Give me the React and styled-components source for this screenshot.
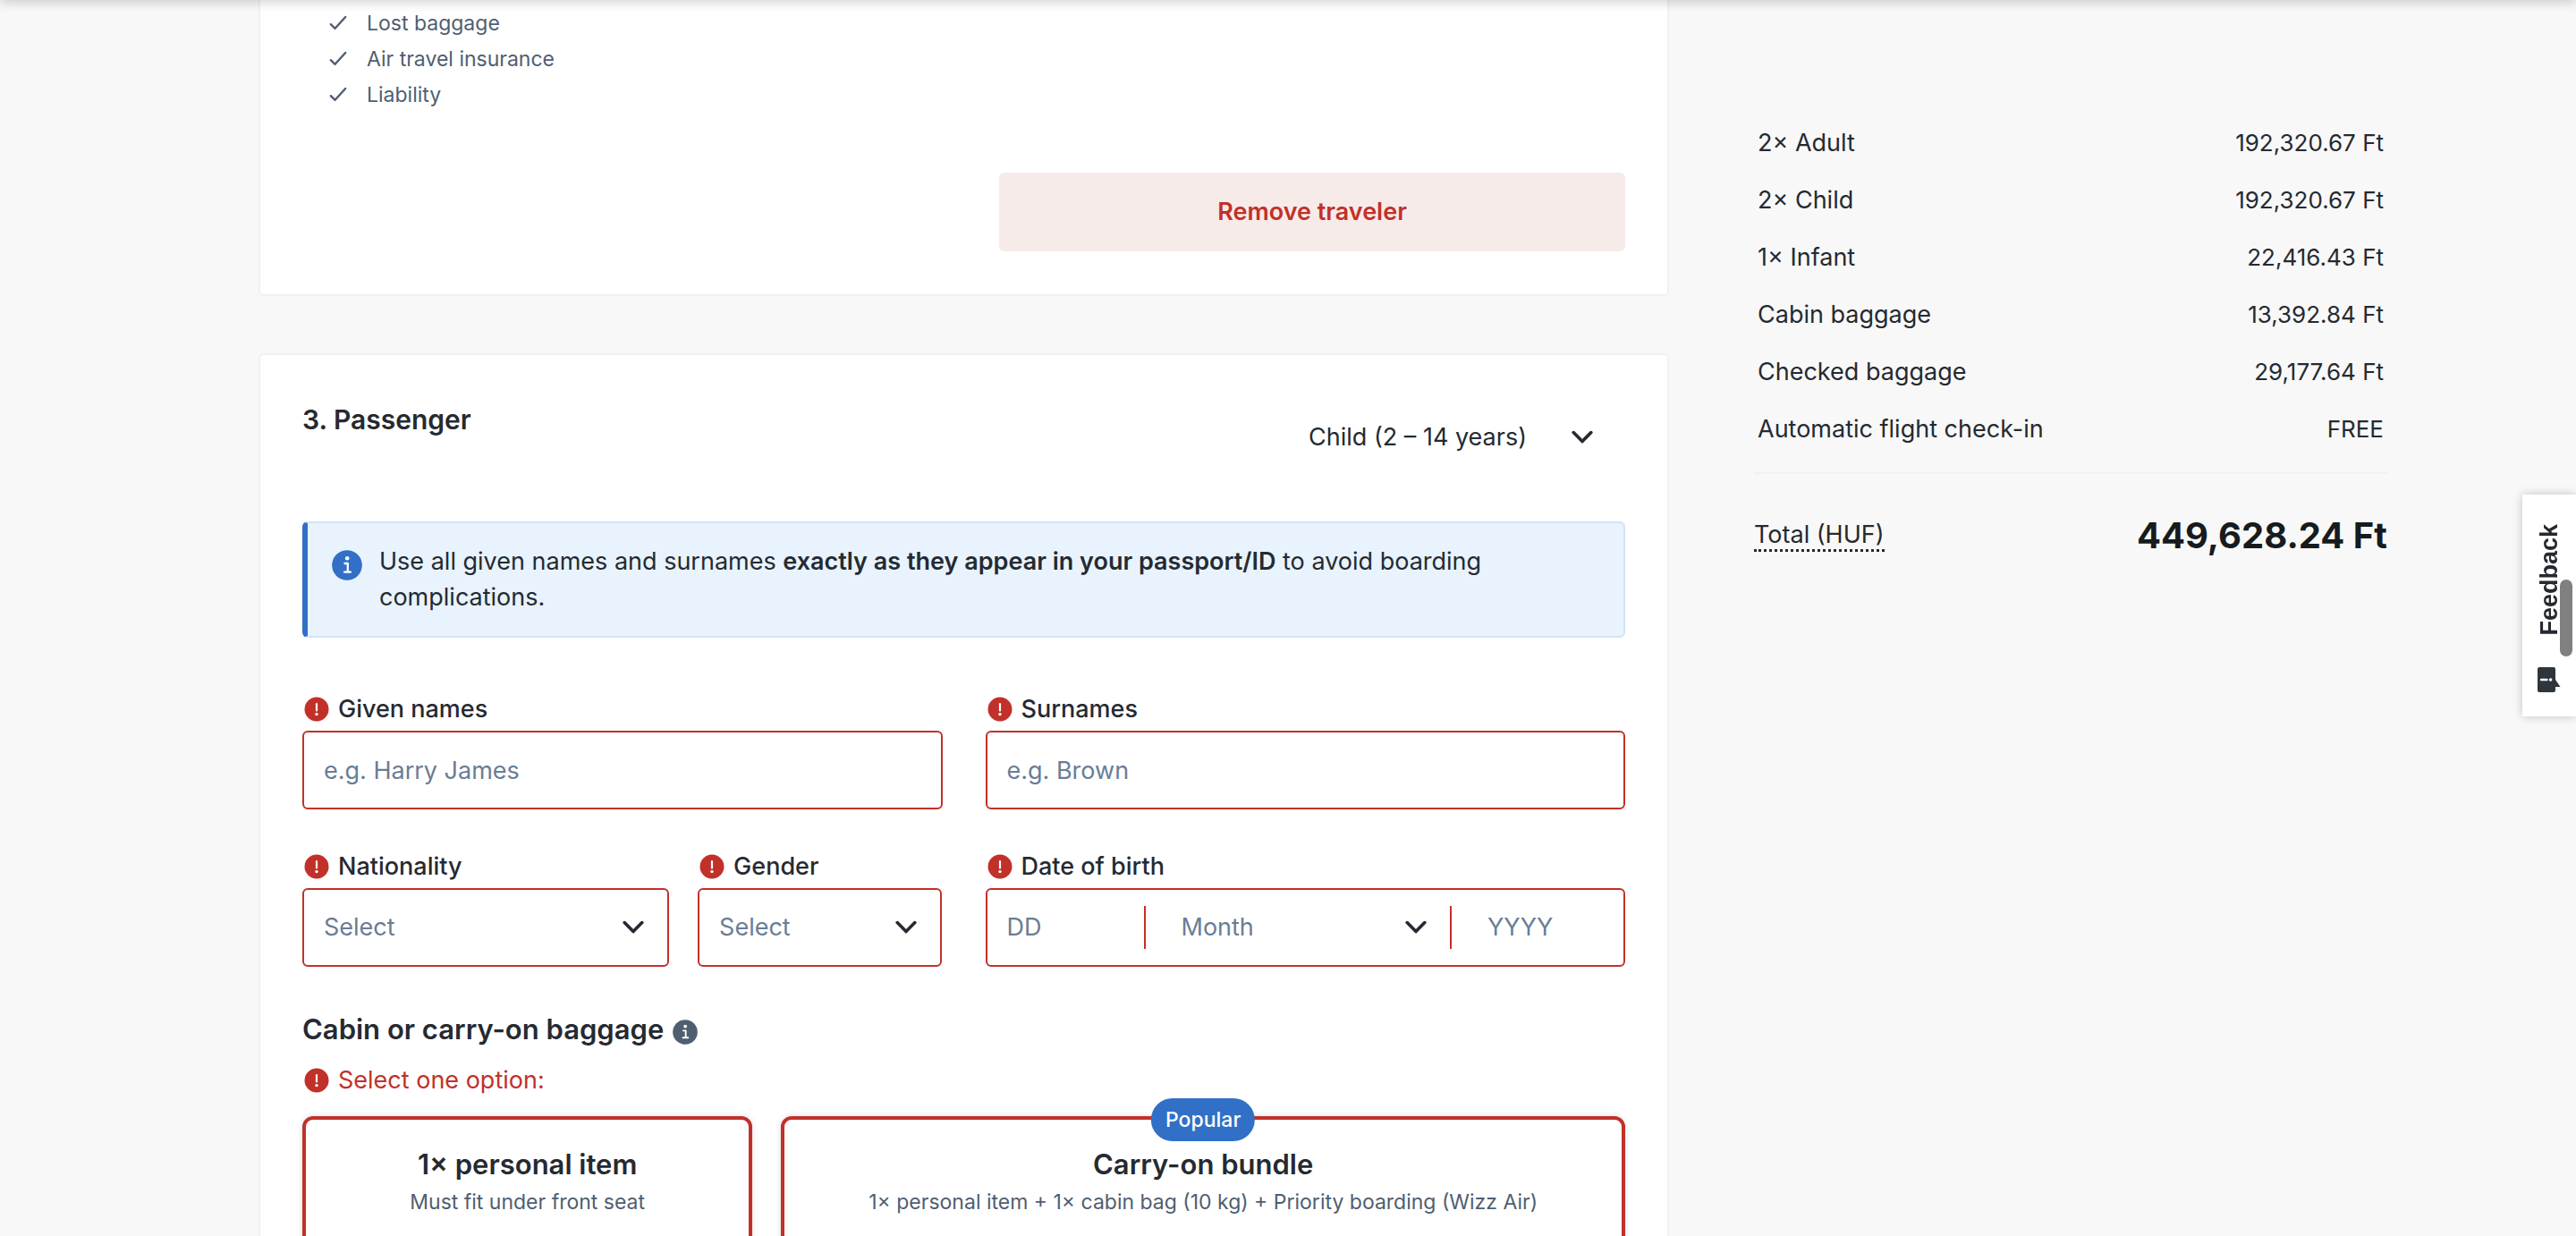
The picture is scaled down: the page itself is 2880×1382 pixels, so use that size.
import React from "react";
import styled, { createGlobalStyle, css } from "styled-components";

const c = {
  ink: "#252a31",
  muted: "#4f5e71",
  placeholder: "#697d95",
  red: "#c13129",
  redSoft: "#f6ebe9",
  blue: "#3170c6",
  blueSoft: "#e8f3fd",
  blueLine: "#d0e4f6",
  line: "#eff1f6",
  page: "#f8f8f8",
};

const Global = createGlobalStyle`
  *, *::before, *::after { box-sizing: border-box; }
  body {
    margin: 0;
    background: ${c.page};
    color: ${c.ink};
    font: 400 27px/40px Inter, Roboto, "Liberation Sans", sans-serif;
    overflow: hidden;
  }
  h2, h3, p, ul, dl, dd, dt { margin: 0; padding: 0; }
  button, input, select { font: inherit; color: inherit; margin: 0; }
`;

const Page = styled.div`
  height: 100vh;
  overflow: hidden;
  display: grid;
  grid-template-columns: minmax(0, 1fr) 708px;
  align-items: start;
  column-gap: 95px;
  padding: 0 211px 0 289px;
`;

const TopShadow = styled.div`
  position: fixed;
  inset: -8px 0 auto;
  height: 8px;
  box-shadow: 0 0 14px rgba(0, 0, 0, 0.32);
`;

const Main = styled.main`
  display: flex;
  flex-direction: column;
  gap: 64px;
`;

const Card = styled.section`
  background: #fff;
  border: 2px solid ${c.line};
  border-radius: 6px;
  padding: 48px 47px;
  ${(p) => p.$continued && css`
    border-top: 0;
    border-radius: 0 0 6px 6px;
    padding-top: 6px;
  `}
`;

const Perks = styled.ul`
  list-style: none;
  && { padding-left: 30px; }
  color: ${c.muted};
  font-size: 23px;
`;

const Perk = styled.li`
  display: flex;
  align-items: center;
  gap: 22px;
`;

const RemoveButton = styled.button`
  display: block;
  width: 700px;
  height: 88px;
  margin: 67px 0 0 auto;
  border: 0;
  border-radius: 6px;
  background: ${c.redSoft};
  color: ${c.red};
  font-weight: 600;
`;

const Header = styled.header`
  display: flex;
  justify-content: space-between;
  align-items: flex-start;
`;

const Title = styled.h2`
  font-size: 30px;
  font-weight: 600;
  line-height: 40px;
  && { padding-top: 4px; }
`;

const Alert = styled.div`
  display: flex;
  gap: 19px;
  margin-top: 50px;
  padding: 23px 96px 23px 27px;
  background: ${c.blueSoft};
  border: 2px solid ${c.blueLine};
  border-left: 6px solid ${c.blue};
  border-radius: 6px;

  svg { flex: none; margin-top: 7px; }
  strong { font-weight: 600; }
`;

const Fields = styled.div`
  display: grid;
  grid-template-columns: 1fr 1fr;
  gap: 48px;
  margin-top: 64px;
`;

const Pair = styled.div`
  display: grid;
  grid-template-columns: 3fr 2fr;
  gap: 32px;
`;

const Field = styled.div`
  display: flex;
  flex-direction: column;
  gap: 8px;
  min-width: 0;
`;

const labelLine = css`
  display: flex;
  align-items: center;
  gap: 10px;
  && { padding-left: 2px; }
  line-height: 32px;
`;

const Label = styled.label`
  ${labelLine}
  font-weight: 500;
`;

const ErrorLine = styled.p`
  ${labelLine}
  && { margin: 21px 0 24px; }
  color: ${c.red};
`;

const boxed = css`
  height: 88px;
  border: 2px solid ${c.red};
  border-radius: 6px;
  background: #fff;
`;

const Input = styled.input`
  width: 100%;
  min-width: 0;
  padding: 0 22px;
  border: 0;
  background: transparent;
  outline: 0;
  ${(p) => p.$boxed && boxed}
  &::placeholder { color: ${c.placeholder}; opacity: 1; }
`;

const SelectWrap = styled.div`
  position: relative;
  display: flex;
  min-width: 0;
  ${(p) => p.$boxed && boxed}

  svg {
    position: absolute;
    right: ${(p) => p.$iconRight || 26}px;
    top: 50%;
    transform: translateY(-50%);
    pointer-events: none;
  }
`;

const Select = styled.select`
  appearance: none;
  width: 100%;
  height: 100%;
  padding: 0 72px 0 ${(p) => p.$left || 22}px;
  border: 0;
  background: transparent;
  color: ${(p) => (p.$filled ? c.ink : c.placeholder)};
  outline: 0;
`;

const TypeSelect = styled(SelectWrap)`
  flex: none;
  width: 362px;
  height: 88px;
`;

const DateBox = styled.div`
  ${boxed}
  display: grid;
  grid-template-columns: 175px minmax(0, 1fr) 194px;
  align-items: center;
`;

const DatePart = styled.div`
  height: 48px;
  border-left: 2px solid ${c.red};
  display: flex;
  > * { flex: 1; }
  input { padding-left: 40px; }
`;

const SectionTitle = styled.h3`
  display: flex;
  align-items: center;
  gap: 10px;
  && { margin-top: 50px; }
  font-size: 31px;
  font-weight: 600;
  line-height: 40px;
  svg { margin-top: 6px; }
`;

const Options = styled.div`
  display: grid;
  grid-template-columns: 8fr 15fr;
  gap: 32px;
`;

const Option = styled.button`
  position: relative;
  display: flex;
  flex-direction: column;
  align-items: center;
  gap: 6px;
  padding: 30px 24px 96px;
  border: 4px solid ${c.red};
  border-radius: 12px;
  background: #fff;
  box-shadow: 0 0 6px rgba(37, 42, 49, 0.16);
`;

const OptionName = styled.span`
  font-size: 31px;
  font-weight: 600;
  line-height: 40px;
`;

const OptionNote = styled.span`
  color: ${c.muted};
  font-size: 23px;
  line-height: 32px;
`;

const Badge = styled.span`
  position: absolute;
  top: -24px;
  left: 50%;
  transform: translateX(-50%);
  padding: 0 16px;
  border-radius: 24px;
  background: ${c.blue};
  color: #fff;
  font-size: 23px;
  font-weight: 500;
  line-height: 48px;
`;

const Summary = styled.aside`
  padding-top: 128px;
`;

const Prices = styled.dl`
  && { padding: 0 4px 16px; }
  border-bottom: 2px solid ${c.line};
`;

const PriceRow = styled.div`
  display: flex;
  justify-content: space-between;
  padding: 12px 0;
  dd { font-size: 26px; }
`;

const Total = styled.div`
  display: flex;
  justify-content: space-between;
  align-items: center;
  margin-top: 45px;
`;

const TotalLabel = styled.span`
  line-height: 32px;
  border-bottom: 3px dotted ${c.ink};
`;

const TotalPrice = styled.strong`
  color: #171b1e;
  font-size: 40px;
  font-weight: 700;
  line-height: 48px;
`;

const Feedback = styled.button`
  position: fixed;
  right: 0;
  top: 553px;
  width: 60px;
  height: 248px;
  padding: 0 0 27px;
  border: 0;
  background: #fff;
  box-shadow: 0 0 10px rgba(0, 0, 0, 0.22);
  display: flex;
  flex-direction: column;
  align-items: center;
  justify-content: flex-end;
  gap: 35px;
  font: 700 27px/32px "Liberation Sans", Arial, sans-serif;

  span { writing-mode: vertical-rl; transform: rotate(180deg); }
`;

const ScrollThumb = styled.div`
  position: fixed;
  right: 4px;
  top: 648px;
  width: 14px;
  height: 86px;
  border-radius: 7px;
  background: #808080;
`;

const Check = () => (
  <svg width="20" height="18" viewBox="0 0 20 18" fill="none" stroke="currentColor" strokeWidth="2.4" strokeLinecap="round" strokeLinejoin="round" aria-hidden="true">
    <path d="M1.8 10.2 6.6 14.8 18.2 2" />
  </svg>
);

const Chevron = () => (
  <svg width="24" height="16" viewBox="0 0 24 16" fill="none" stroke={c.ink} strokeWidth="3.6" strokeLinecap="round" strokeLinejoin="round" aria-hidden="true">
    <path d="M2.2 2.6 12 12.6 21.8 2.6" />
  </svg>
);

const ErrorIcon = () => (
  <svg width="28" height="28" viewBox="0 0 28 28" aria-hidden="true">
    <circle cx="14" cy="14" r="13.5" fill={c.red} />
    <path d="M14 8v7.4" stroke="#fff" strokeWidth="2.2" strokeLinecap="round" />
    <circle cx="14" cy="19.6" r="1.7" fill="#fff" />
  </svg>
);

const InfoIcon = ({ size, color }) => (
  <svg width={size} height={size} viewBox="0 0 34 34" aria-hidden="true">
    <circle cx="17" cy="17" r="16.8" fill={color} />
    <circle cx="17.2" cy="9.2" r="2.3" fill="#fff" />
    <path d="M14.4 15h3.4v9.4M14 24.6h7" fill="none" stroke="#fff" strokeWidth="2.3" strokeLinecap="round" strokeLinejoin="round" />
  </svg>
);

const FeedbackIcon = () => (
  <svg width="26" height="28" viewBox="0 0 26 28" aria-hidden="true">
    <path d="M2 0h16a2 2 0 0 1 2 2v12l5.5 8H20v4a2 2 0 0 1-2 2H2a2 2 0 0 1-2-2V2a2 2 0 0 1 2-2Z" fill="#2f353c" />
    <path d="M4 14h6.500" stroke="#fff" strokeWidth="2.4" strokeLinecap="round" />
    <circle cx="14.6" cy="14" r="1.8" fill="#fff" />
  </svg>
);

const perks = ["Lost baggage", "Air travel insurance", "Liability"];

const prices = [
  ["2× Adult", "192,320.67 Ft"],
  ["2× Child", "192,320.67 Ft"],
  ["1× Infant", "22,416.43 Ft"],
  ["Cabin baggage", "13,392.84 Ft"],
  ["Checked baggage", "29,177.64 Ft"],
  ["Automatic flight check-in", "FREE"],
];

const FieldLabel = ({ id, children }) => (
  <Label htmlFor={id}>
    <ErrorIcon />
    {children}
  </Label>
);

const Dropdown = ({ id, text }) => (
  <SelectWrap $boxed>
    <Select id={id}>
      <option>{text}</option>
    </Select>
    <Chevron />
  </SelectWrap>
);

export default function App() {
  return (
    <>
      <Global />
      <Page>
        <Main>
          <Card $continued>
            <Perks>
              {perks.map((p) => (
                <Perk key={p}>
                  <Check />
                  {p}
                </Perk>
              ))}
            </Perks>
            <RemoveButton type="button">Remove traveler</RemoveButton>
          </Card>

          <Card>
            <Header>
              <Title>3. Passenger</Title>
              <TypeSelect $iconRight={36}>
                <Select $filled $left={8} aria-label="Passenger type">
                  <option>Child (2 – 14 years)</option>
                </Select>
                <Chevron />
              </TypeSelect>
            </Header>

            <Alert>
              <InfoIcon size={34} color={c.blue} />
              <p>
                Use all given names and surnames <strong>exactly as they appear in your passport/ID</strong> to avoid boarding complications.
              </p>
            </Alert>

            <Fields>
              <Field>
                <FieldLabel id="given">Given names</FieldLabel>
                <Input $boxed id="given" placeholder="e.g. Harry James" />
              </Field>
              <Field>
                <FieldLabel id="surnames">Surnames</FieldLabel>
                <Input $boxed id="surnames" placeholder="e.g. Brown" />
              </Field>
              <Pair>
                <Field>
                  <FieldLabel id="nationality">Nationality</FieldLabel>
                  <Dropdown id="nationality" text="Select" />
                </Field>
                <Field>
                  <FieldLabel id="gender">Gender</FieldLabel>
                  <Dropdown id="gender" text="Select" />
                </Field>
              </Pair>
              <Field>
                <FieldLabel id="day">Date of birth</FieldLabel>
                <DateBox>
                  <Input id="day" placeholder="DD" />
                  <DatePart>
                    <SelectWrap>
                      <Select $left={40} aria-label="Month">
                        <option>Month</option>
                      </Select>
                      <Chevron />
                    </SelectWrap>
                  </DatePart>
                  <DatePart>
                    <Input aria-label="Year" placeholder="YYYY" />
                  </DatePart>
                </DateBox>
              </Field>
            </Fields>

            <SectionTitle>
              Cabin or carry-on baggage
              <InfoIcon size={28} color={c.muted} />
            </SectionTitle>
            <ErrorLine>
              <ErrorIcon />
              Select one option:
            </ErrorLine>
            <Options>
              <Option type="button">
                <OptionName>1× personal item</OptionName>
                <OptionNote>Must fit under front seat</OptionNote>
              </Option>
              <Option type="button">
                <Badge>Popular</Badge>
                <OptionName>Carry-on bundle</OptionName>
                <OptionNote>1× personal item + 1× cabin bag (10 kg) + Priority boarding (Wizz Air)</OptionNote>
              </Option>
            </Options>
          </Card>
        </Main>

        <Summary>
          <Prices>
            {prices.map(([name, price]) => (
              <PriceRow key={name}>
                <dt>{name}</dt>
                <dd>{price}</dd>
              </PriceRow>
            ))}
          </Prices>
          <Total>
            <TotalLabel>Total (HUF)</TotalLabel>
            <TotalPrice>449,628.24 Ft</TotalPrice>
          </Total>
        </Summary>
      </Page>
      <TopShadow />
      <Feedback type="button">
        <span>Feedback</span>
        <FeedbackIcon />
      </Feedback>
      <ScrollThumb />
    </>
  );
}
